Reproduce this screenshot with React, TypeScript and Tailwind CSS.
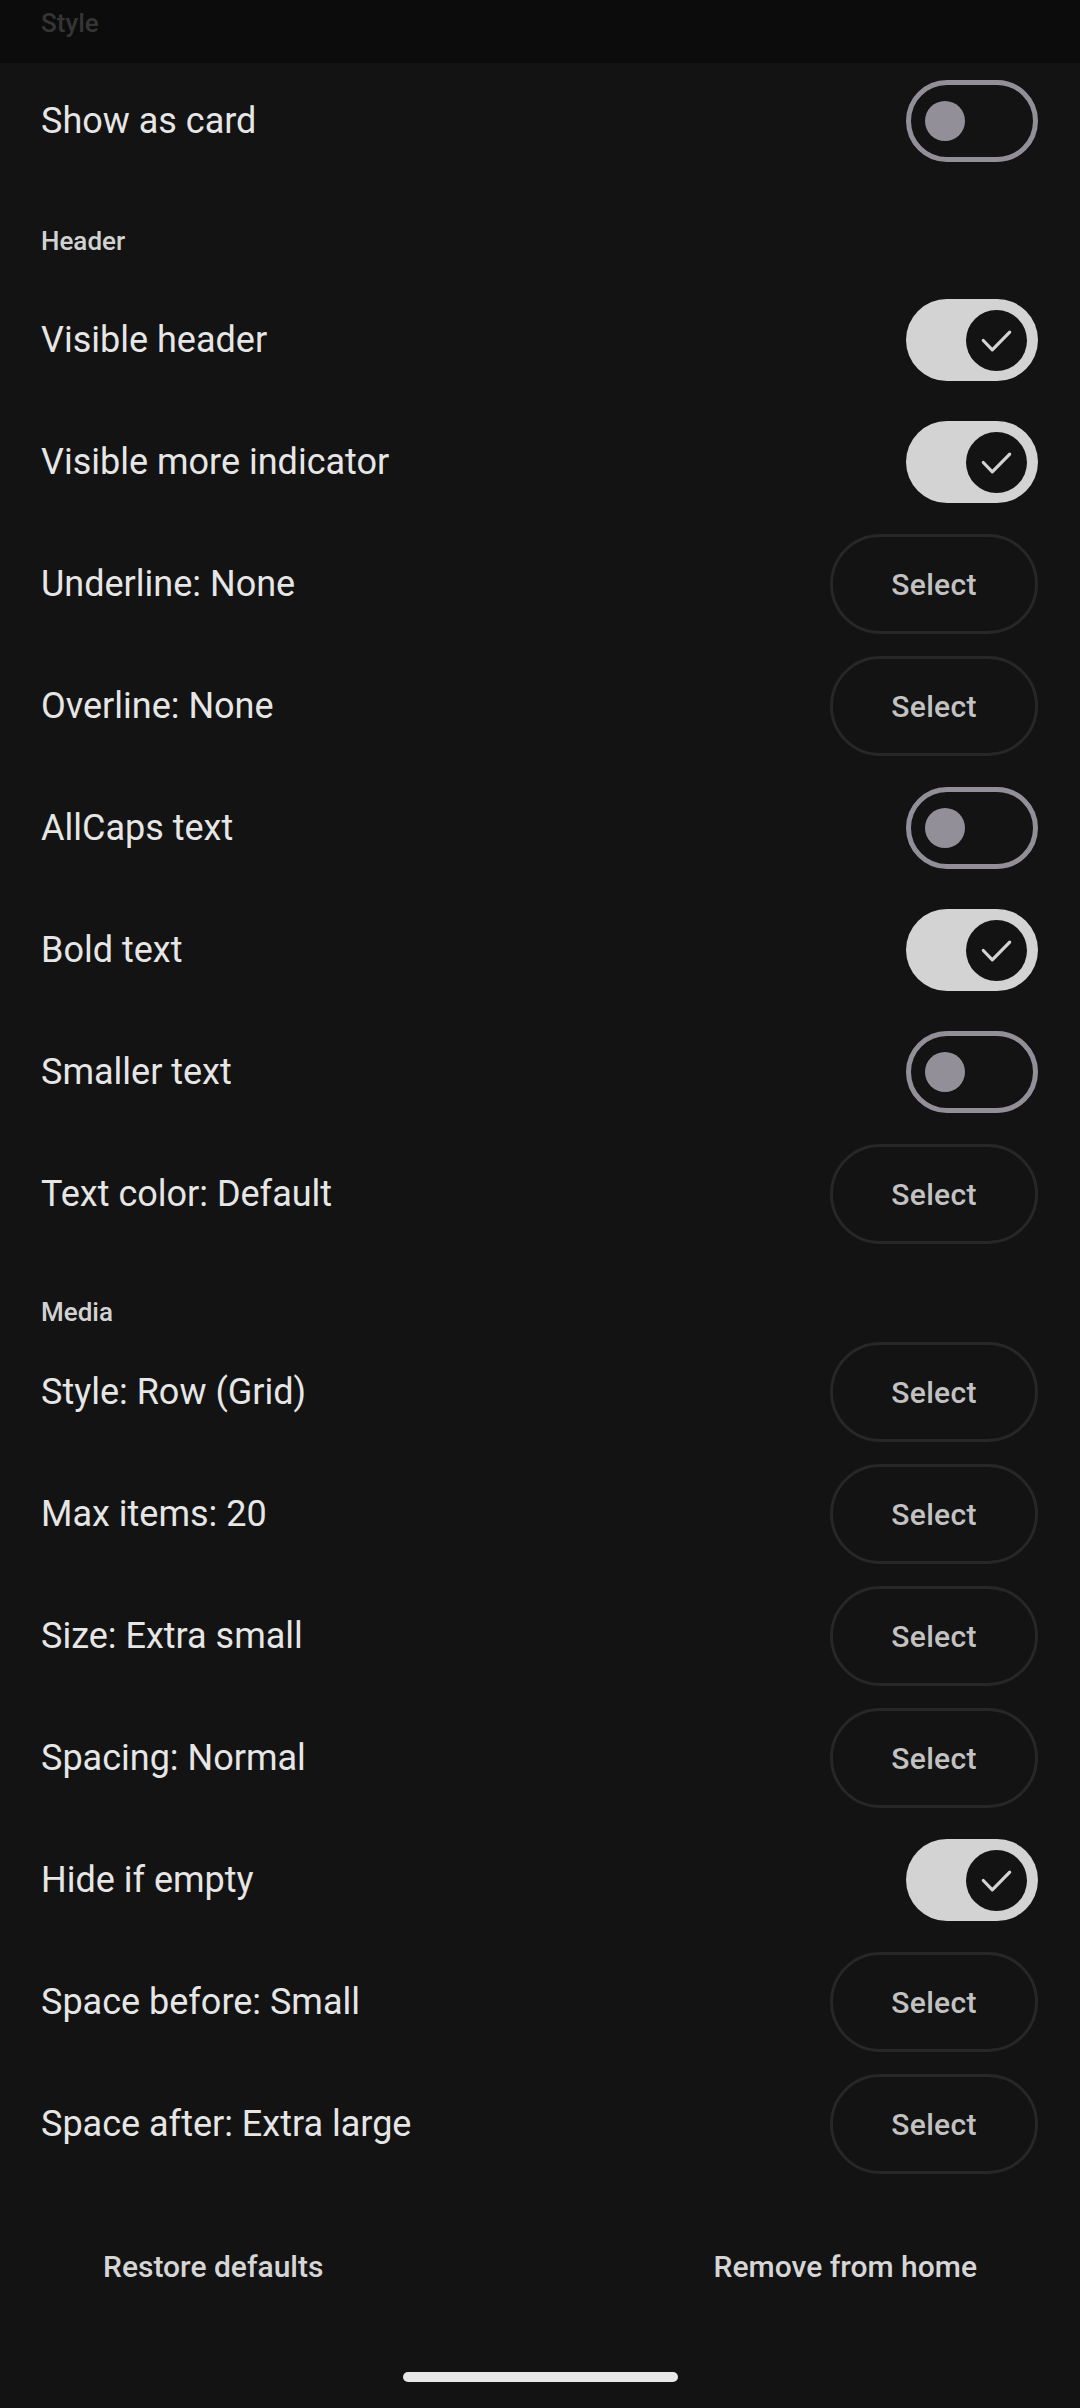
import React from "react";

type Row =
  | { kind: "toggle"; label: string; on: boolean }
  | { kind: "select"; label: string };

function Toggle({ on }: { on: boolean }) {
  if (on) {
    return (
      <div className="w-[132px] h-[82px] rounded-full bg-[#d3d3d3] flex items-center justify-end pr-[11px] shrink-0">
        <div className="w-[61px] h-[61px] rounded-full bg-[#131313] flex items-center justify-center">
          <svg width="61" height="61" viewBox="0 0 61 61">
            <polyline
              points="17.3,30.5 26.3,39.8 43.7,22.2"
              fill="none"
              stroke="#d3d3d3"
              strokeWidth="3.2"
              strokeLinecap="round"
              strokeLinejoin="round"
            />
          </svg>
        </div>
      </div>
    );
  }
  return (
    <div className="w-[132px] h-[82px] rounded-full border-[5px] border-[#938f99] flex items-center pl-[14px] shrink-0">
      <div className="w-[40px] h-[40px] rounded-full bg-[#938f99]" />
    </div>
  );
}

function SelectButton() {
  return (
    <div className="w-[208px] h-[100px] rounded-full border-[3px] border-[#272727] flex items-center justify-center shrink-0">
      <span className="text-[30px] font-medium text-[#c2c2c2] tracking-[0.3px]">Select</span>
    </div>
  );
}

function SettingRow({ row }: { row: Row }) {
  return (
    <div className="h-[122px] flex items-center justify-between pl-[41px] pr-[42px]">
      <span className="text-[36px] text-[#e6e6e6]">{row.label}</span>
      {row.kind === "toggle" ? <Toggle on={row.on} /> : <SelectButton />}
    </div>
  );
}

const headerRows: Row[] = [
  { kind: "toggle", label: "Visible header", on: true },
  { kind: "toggle", label: "Visible more indicator", on: true },
  { kind: "select", label: "Underline: None" },
  { kind: "select", label: "Overline: None" },
  { kind: "toggle", label: "AllCaps text", on: false },
  { kind: "toggle", label: "Bold text", on: true },
  { kind: "toggle", label: "Smaller text", on: false },
  { kind: "select", label: "Text color: Default" },
];

const mediaRows: Row[] = [
  { kind: "select", label: "Style: Row (Grid)" },
  { kind: "select", label: "Max items: 20" },
  { kind: "select", label: "Size: Extra small" },
  { kind: "select", label: "Spacing: Normal" },
  { kind: "toggle", label: "Hide if empty", on: true },
  { kind: "select", label: "Space before: Small" },
  { kind: "select", label: "Space after: Extra large" },
];

export default function App() {
  return (
    <div
      className="w-[1080px] h-[2408px] bg-[#131313] flex flex-col overflow-hidden"
      style={{ fontFamily: "Roboto, 'Noto Sans', sans-serif" }}
    >
      <div className="h-[63px] bg-[#0c0c0c] pl-[41px] shrink-0">
        <span className="block text-[26px] font-medium text-[#353535] leading-[30px] pt-[8px]">Style</span>
      </div>
      <div className="h-[116px] flex items-center justify-between pl-[41px] pr-[42px] shrink-0">
        <span className="text-[36px] text-[#e6e6e6]">Show as card</span>
        <Toggle on={false} />
      </div>
      <div className="h-[100px] pl-[41px] pt-[47px] shrink-0">
        <span className="block text-[26px] font-medium text-[#d2d2d2] leading-[30px]">Header</span>
      </div>
      {headerRows.map((r) => (
        <SettingRow key={r.label} row={r} />
      ))}
      <div className="h-[76px] pl-[41px] pt-[42px] shrink-0">
        <span className="block text-[26px] font-medium text-[#d2d2d2] leading-[30px]">Media</span>
      </div>
      {mediaRows.map((r) => (
        <SettingRow key={r.label} row={r} />
      ))}
      <div className="flex justify-between pl-[103px] pr-[103px] pt-[31px] shrink-0">
        <div className="h-[100px] flex items-center">
          <span className="text-[30px] font-medium text-[#d6d6d6]">Restore defaults</span>
        </div>
        <div className="h-[100px] flex items-center">
          <span className="text-[30px] font-medium text-[#d6d6d6]">Remove from home</span>
        </div>
      </div>
      <div className="flex-1 flex items-end justify-center pb-[26px]">
        <div className="w-[275px] h-[10px] rounded-full bg-[#e8e8e8]" />
      </div>
    </div>
  );
}
